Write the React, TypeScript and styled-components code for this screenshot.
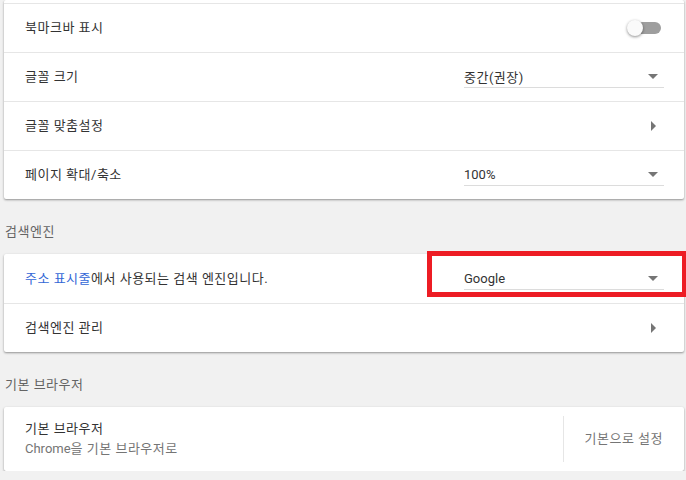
import styled, { createGlobalStyle } from "styled-components";

const GlobalStyle = createGlobalStyle`
  html, body {
    margin: 0;
    padding: 0;
    background: #f1f1f1;
    font-family: Roboto, "Noto Sans CJK KR", sans-serif;
    font-size: 13px;
    color: #333333;
    overflow: hidden;
  }
`;

export default function App() {
  return (
    <>
      <GlobalStyle />
      <Page>
        <Card>
          <Stub />
          <Row>
            <Label>북마크바 표시</Label>
            <Toggle>
              <ToggleBar />
              <ToggleKnob />
            </Toggle>
          </Row>
          <Row>
            <Label>글꼴 크기</Label>
            <Select>
              <Ko>중간(권장)</Ko>
              <DownArrow />
            </Select>
          </Row>
          <Row>
            <Label>글꼴 맞춤설정</Label>
            <ArrowBox>
              <RightArrow />
            </ArrowBox>
          </Row>
          <Row>
            <Label>페이지 확대/축소</Label>
            <Select>
              <span>100%</span>
              <DownArrow />
            </Select>
          </Row>
        </Card>

        <SectionTitle>검색엔진</SectionTitle>
        <Card>
          <Row first>
            <Label>
              <Link>주소 표시줄</Link>에서 사용되는 검색 엔진입니다.
            </Label>
            <Select>
              <span>Google</span>
              <DownArrow />
            </Select>
            <Highlight />
          </Row>
          <Row>
            <Label>검색엔진 관리</Label>
            <ArrowBox>
              <RightArrow />
            </ArrowBox>
          </Row>
        </Card>

        <SectionTitle>기본 브라우저</SectionTitle>
        <Card>
          <TallRow>
            <TwoLine>
              <Label>기본 브라우저</Label>
              <SubLabel>
                <Latin>Chrome</Latin>을 기본 브라우저로
              </SubLabel>
            </TwoLine>
            <Divider />
            <TextButton>기본으로 설정</TextButton>
          </TallRow>
        </Card>
      </Page>
    </>
  );
}

const Page = styled.div`
  width: 680px;
  padding-left: 4px;
  display: flex;
  flex-direction: column;
`;

const Card = styled.div`
  background: #fff;
  border-radius: 2px;
  box-shadow: 0 1px 2px rgba(0, 0, 0, 0.3), 0 1px 3px rgba(0, 0, 0, 0.12);
  display: flex;
  flex-direction: column;
`;

const Stub = styled.div`
  height: 3px;
`;

const Row = styled.div<{ first?: boolean }>`
  position: relative;
  height: 48px;
  border-top: 1px solid ${(p) => (p.first ? "transparent" : "#e6e6e6")};
  display: flex;
  align-items: center;
  justify-content: space-between;
  padding: 0 20px 0 21px;
`;

const TallRow = styled.div`
  height: 64px;
  display: flex;
  align-items: center;
  padding: 0 21px 0 21px;
  box-sizing: border-box;
`;

const Label = styled.div`
  font-size: 13px;
  line-height: 20px;
  letter-spacing: 0.5px;
  color: #333333;
`;

const SubLabel = styled.div`
  font-size: 13px;
  line-height: 20px;
  letter-spacing: 0.5px;
  color: #757575;
`;

const Latin = styled.span`
  letter-spacing: 0;
`;

const Ko = styled.span`
  letter-spacing: 0.5px;
`;

const TwoLine = styled.div`
  flex: 1;
  display: flex;
  flex-direction: column;
`;

const Link = styled.span`
  color: #3367d6;
`;

const SectionTitle = styled.div`
  padding: 23px 0 12px 1px;
  line-height: 20px;
  font-size: 13px;
  letter-spacing: 0.5px;
  color: #646464;
`;

const Select = styled.div`
  width: 200px;
  height: 22px;
  box-sizing: border-box;
  border-bottom: 1px solid #dcdcdc;
  display: flex;
  align-items: center;
  justify-content: space-between;
  font-size: 13px;
  color: #333333;
  padding-right: 6px;
`;

const DownArrow = styled.div`
  width: 0;
  height: 0;
  border-left: 5px solid transparent;
  border-right: 5px solid transparent;
  border-top: 5px solid #757575;
`;

const ArrowBox = styled.div`
  width: 24px;
  height: 24px;
  display: flex;
  align-items: center;
  justify-content: center;
  margin-right: -1px;
`;

const RightArrow = styled.div`
  width: 0;
  height: 0;
  border-top: 5px solid transparent;
  border-bottom: 5px solid transparent;
  border-left: 5px solid #757575;
`;

const Toggle = styled.div`
  position: relative;
  width: 34px;
  height: 16px;
  margin-right: 3px;
`;

const ToggleBar = styled.div`
  position: absolute;
  left: 4px;
  right: 0;
  top: 2px;
  height: 12px;
  border-radius: 6px;
  background: #9e9e9e;
`;

const ToggleKnob = styled.div`
  position: absolute;
  left: 0;
  top: 0;
  width: 16px;
  height: 16px;
  border-radius: 50%;
  background: #fafafa;
  box-shadow: 0 1px 3px rgba(0, 0, 0, 0.45);
`;

const Highlight = styled.div`
  position: absolute;
  left: 423px;
  top: -4px;
  width: 250px;
  height: 36px;
  border: 5px solid #ed1c24;
`;

const Divider = styled.div`
  width: 1px;
  height: 46px;
  background: #e6e6e6;
  margin-right: 21px;
`;

const TextButton = styled.div`
  font-size: 13px;
  line-height: 20px;
  letter-spacing: 0.5px;
  color: #757575;
`;
